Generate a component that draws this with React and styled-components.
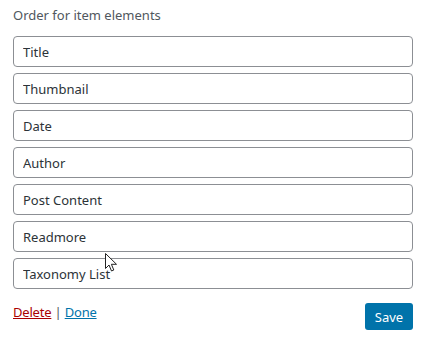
import React from 'react'
import styled, { createGlobalStyle } from 'styled-components'

const GlobalStyle = createGlobalStyle`
  html, body {
    margin: 0;
    padding: 0;
    background: #fff;
  }
  body {
    font-family: "Noto Sans", "Open Sans", sans-serif;
    font-size: 13px;
    color: #3c434a;
  }
`

const Panel = styled.div`
  position: relative;
  width: 428px;
  height: 340px;
  box-sizing: border-box;
  padding: 6px 15px 0 13px;
`

const Heading = styled.p`
  margin: 0 0 12px;
  line-height: 18px;
  color: #50575e;
`

const FieldList = styled.div`
  display: flex;
  flex-direction: column;
  gap: 6px;
`

const Field = styled.input`
  display: block;
  width: 400px;
  height: 31px;
  box-sizing: border-box;
  margin: 0;
  padding: 0 9px;
  border: 1px solid #8c8f94;
  border-radius: 4px;
  background: #fff;
  font: inherit;
  font-size: 13px;
  color: #2c3338;
  outline: none;
`

const Footer = styled.div`
  display: flex;
  justify-content: space-between;
  align-items: flex-start;
  margin-top: 14px;
`

const Links = styled.div`
  line-height: 18px;
  color: #50575e;
  letter-spacing: -0.2px;
`

const ActionLink = styled.a`
  color: ${p => (p.$danger ? '#a00' : '#0073aa')};
  text-decoration: underline;
  cursor: pointer;
`

const SaveButton = styled.button`
  height: 27px;
  width: 48px;
  padding: 0;
  border: 0;
  border-radius: 3px;
  background: #0073aa;
  color: #fff;
  font: inherit;
  font-size: 13px;
  cursor: pointer;
`

const Pointer = styled.svg`
  position: absolute;
  left: 105px;
  top: 253px;
  pointer-events: none;
`

const items = ['Title', 'Thumbnail', 'Date', 'Author', 'Post Content', 'Readmore', 'Taxonomy List']

export default function App () {
  return (
    <>
      <GlobalStyle/>
      <Panel>
        <Heading>Order for item elements</Heading>
        <FieldList>
          {items.map(item => (
            <Field key={item} type="text" defaultValue={item} readOnly/>
          ))}
        </FieldList>
        <Footer>
          <Links>
            <ActionLink $danger>Delete</ActionLink> | <ActionLink>Done</ActionLink>
          </Links>
          <SaveButton>Save</SaveButton>
        </Footer>
        <Pointer width="13" height="19" viewBox="0 0 13 19">
          <path d="M0.5 0.5 L0.5 15.5 L4 12 L6.5 18 L8.8 17 L6.4 11.3 L11.5 11.3 Z"
            fill="#fff" stroke="#222" strokeWidth="1" strokeLinejoin="round"/>
        </Pointer>
      </Panel>
    </>
  )
}
